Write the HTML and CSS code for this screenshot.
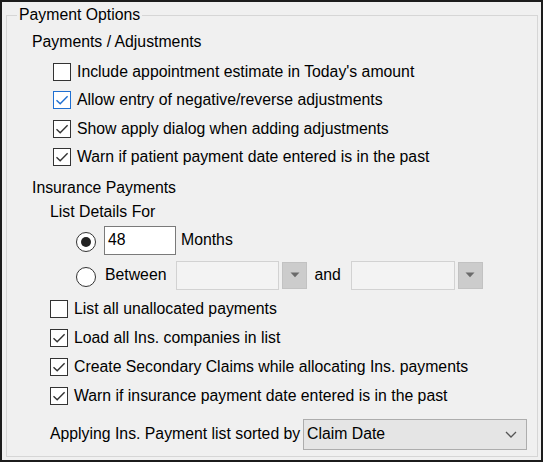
FILE: index.html
```html
<!DOCTYPE html>
<html lang="en">
<head>
<meta charset="utf-8">
<title>Payment Options</title>
<link rel="stylesheet" href="styles.css">
</head>
<body>
<div class="window">
  <fieldset class="group">
    <legend class="legend">Payment Options</legend>

    <div class="heading heading-first">Payments / Adjustments</div>
    <div class="opts opts-adj">
      <div class="cb-row"><span class="cb"></span><span>Include appointment estimate in Today's amount</span></div>
      <div class="cb-row"><span class="cb cb-focus"><svg viewBox="0 0 18 18"><path d="M3.5 9.2 L7.2 12.8 L14.6 5.2"/></svg></span><span>Allow entry of negative/reverse adjustments</span></div>
      <div class="cb-row"><span class="cb"><svg viewBox="0 0 18 18"><path d="M3.5 9.2 L7.2 12.8 L14.6 5.2"/></svg></span><span>Show apply dialog when adding adjustments</span></div>
      <div class="cb-row"><span class="cb"><svg viewBox="0 0 18 18"><path d="M3.5 9.2 L7.2 12.8 L14.6 5.2"/></svg></span><span>Warn if patient payment date entered is in the past</span></div>
    </div>

    <div class="heading heading-second">Insurance Payments</div>
    <div class="sub">List Details For</div>

    <div class="radio-row radio-row-first">
      <span class="radio radio-on"></span>
      <span class="textbox">48</span>
      <span class="months">Months</span>
    </div>
    <div class="radio-row radio-row-second">
      <span class="radio"></span>
      <span class="between">Between</span>
      <span class="combo combo-a"><span class="combo-field combo-field-a"></span><span class="combo-btn"><svg viewBox="0 0 10 6"><path d="M0.5 0.5 H9.5 L5 5.2 Z"/></svg></span></span>
      <span class="and">and</span>
      <span class="combo combo-b"><span class="combo-field combo-field-b"></span><span class="combo-btn"><svg viewBox="0 0 10 6"><path d="M0.5 0.5 H9.5 L5 5.2 Z"/></svg></span></span>
    </div>

    <div class="opts opts-ins">
      <div class="cb-row"><span class="cb"></span><span>List all unallocated payments</span></div>
      <div class="cb-row"><span class="cb"><svg viewBox="0 0 18 18"><path d="M3.5 9.2 L7.2 12.8 L14.6 5.2"/></svg></span><span>Load all Ins. companies in list</span></div>
      <div class="cb-row"><span class="cb"><svg viewBox="0 0 18 18"><path d="M3.5 9.2 L7.2 12.8 L14.6 5.2"/></svg></span><span>Create Secondary Claims while allocating Ins. payments</span></div>
      <div class="cb-row"><span class="cb"><svg viewBox="0 0 18 18"><path d="M3.5 9.2 L7.2 12.8 L14.6 5.2"/></svg></span><span>Warn if insurance payment date entered is in the past</span></div>
    </div>

    <div class="sort-row">
      <span class="sort-label">Applying Ins. Payment list sorted by</span>
      <span class="select"><span class="select-text">Claim Date</span><svg class="chev" viewBox="0 0 12 7"><path d="M1 1 L6 6 L11 1"/></svg></span>
    </div>
  </fieldset>
</div>
</body>
</html>
```

FILE: styles.css
```css
* { box-sizing: border-box; }

html, body {
  margin: 0;
  padding: 0;
  background: #f0f0f0;
}

body {
  font-family: "Liberation Sans", Arial, sans-serif;
  font-size: 15.8px;
  line-height: 18px;
  color: #000;
}

.window {
  width: 543px;
  height: 462px;
  border: 2px solid #1c1c1c;
  background: #f0f0f0;
  padding: 4px 3px 3px 4px;
  display: flex;
  flex-direction: column;
}

.group {
  flex: 1;
  margin: 0;
  padding: 0;
  border: 1px solid #d6d6d6;
  min-width: 0;
  display: flex;
  flex-direction: column;
}

.legend {
  margin-left: 10px;
  padding: 0 2px;
  line-height: 18px;
}

.heading {
  padding-left: 25px;
  height: 18px;
}

.heading-first {
  margin-top: 9px;
  margin-bottom: 6.2px;
}

.heading-second {
  margin-top: 7px;
}

.sub {
  margin-top: 6px;
  padding-left: 43px;
  height: 18px;
}

.opts {
  display: flex;
  flex-direction: column;
}

.opts-adj { padding-left: 46px; }
.opts-adj .cb-row { height: 28.67px; }

.opts-ins {
  padding-left: 43px;
  margin-top: 4.6px;
}
.opts-ins .cb-row { height: 29px; }

.cb-row {
  display: flex;
  align-items: center;
  gap: 6px;
  white-space: nowrap;
}

.cb {
  flex: none;
  width: 18px;
  height: 18px;
  border: 1px solid #333;
  background: #fff;
  position: relative;
}

.cb svg {
  position: absolute;
  left: -1px;
  top: -1px;
  width: 18px;
  height: 18px;
  fill: none;
  stroke: #333;
  stroke-width: 1.4;
}

.cb-focus { border-color: #1f6fd1; }
.cb-focus svg { stroke: #1f6fd1; }

.radio-row {
  display: flex;
  align-items: center;
  height: 29px;
  padding-left: 69px;
  white-space: nowrap;
}

.radio-row-first { margin-top: 5px; }
.radio-row-second { margin-top: 6px; }

.radio {
  flex: none;
  width: 20px;
  height: 20px;
  border: 1px solid #333;
  border-radius: 50%;
  background: #fff;
  margin-top: 4px;
  display: flex;
  align-items: center;
  justify-content: center;
}

.radio-on::after {
  content: "";
  width: 10px;
  height: 10px;
  border-radius: 50%;
  background: #222;
}

.textbox {
  margin-left: 8px;
  width: 72px;
  height: 29px;
  border: 1px solid #7a7a7a;
  background: #fff;
  padding-left: 3px;
  display: flex;
  align-items: center;
}

.months { margin-left: 5px; }

.between { margin-left: 9px; }

.combo {
  display: flex;
  align-items: center;
}

.combo-a { margin-left: 10px; }
.combo-b { margin-left: 10px; }

.combo-field {
  height: 29px;
  border: 1px solid #d2d2d2;
  background: #f3f3f3;
}

.combo-field-a { width: 103px; }
.combo-field-b { width: 104px; }

.combo-btn {
  margin-left: 3px;
  width: 25px;
  height: 27px;
  background: #cccccc;
  border: 1px solid #c2c2c2;
  display: flex;
  align-items: center;
  justify-content: center;
}

.combo-btn svg {
  width: 10px;
  height: 6px;
  fill: #6a6a6a;
}

.and { margin-left: 7px; }

.sort-row {
  display: flex;
  align-items: center;
  height: 31px;
  margin-top: 8.5px;
  padding-left: 43px;
  white-space: nowrap;
}

.select {
  margin-left: auto;
  margin-right: 10px;
  width: 224px;
  height: 31px;
  border: 1px solid #adadad;
  background: #e5e5e5;
  display: flex;
  align-items: center;
  padding-left: 3px;
  padding-right: 9px;
}

.select-text { flex: 1; }

.chev {
  width: 12px;
  height: 7px;
  fill: none;
  stroke: #555;
  stroke-width: 1.3;
}
```
